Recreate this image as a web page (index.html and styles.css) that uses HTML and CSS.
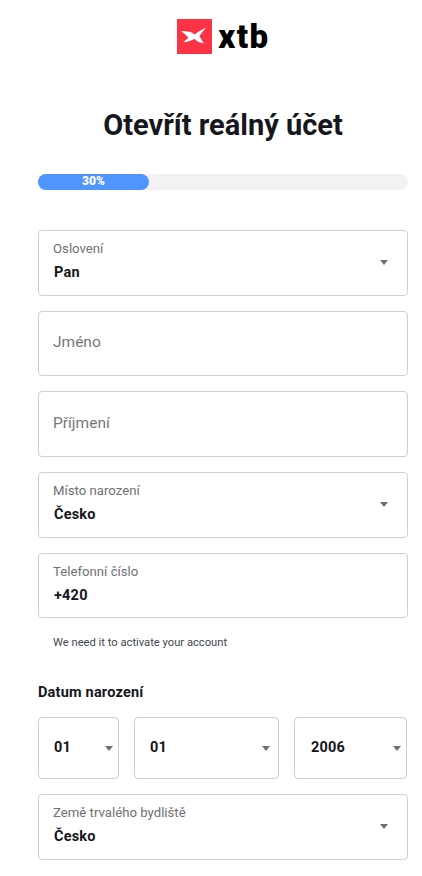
FILE: index.html
```html
<!DOCTYPE html>
<html lang="cs">
<head>
<meta charset="utf-8">
<title>XTB</title>
<link rel="stylesheet" href="styles.css">
</head>
<body>
<main class="page">
  <header class="logo">
    <svg class="logo-mark" viewBox="0 0 35 35" aria-hidden="true">
      <rect width="35" height="35" fill="#fb3345"/>
      <path fill="#fff" d="M4 12 L11 12.500 Q15 13 18 15.500 Q22 11.500 29 9 Q25 13 22.500 17 Q24 20.500 27 24.500 Q21 23.500 17.500 20 Q13 22.500 6 23.500 Q9.500 20.500 11.500 18.500 Q8 15 4 12Z"/>
    </svg>
    <span class="logo-text">xtb</span>
  </header>
  <h1 class="title">Otevřít reálný účet</h1>
  <div class="progress"><div class="progress-bar">30%</div></div>
  <form class="form">
    <div class="field field-select"><span class="label">Oslovení</span><span class="value">Pan</span><i class="caret"></i></div>
    <div class="field field-empty"><span class="placeholder">Jméno</span></div>
    <div class="field field-empty"><span class="placeholder">Příjmení</span></div>
    <div class="field field-select"><span class="label">Místo narození</span><span class="value">Česko</span><i class="caret"></i></div>
    <div class="field"><span class="label">Telefonní číslo</span><span class="value">+420</span></div>
    <p class="hint">We need it to activate your account</p>
    <h2 class="section">Datum narození</h2>
    <div class="date-row">
      <div class="date date-day"><span class="value">01</span><i class="caret"></i></div>
      <div class="date date-month"><span class="value">01</span><i class="caret"></i></div>
      <div class="date date-year"><span class="value">2006</span><i class="caret"></i></div>
    </div>
    <div class="field field-select"><span class="label">Země trvalého bydliště</span><span class="value">Česko</span><i class="caret"></i></div>
  </form>
</main>
</body>
</html>
```
FILE: styles.css
```css
* { box-sizing: border-box; }
html, body { margin: 0; padding: 0; background: #fff; }
body { font-family: Roboto, "Liberation Sans", sans-serif; color: #15171c; height: 876px; overflow: hidden; }
.page { padding: 19px 14px 0 38px; }
.logo { display: flex; justify-content: center; align-items: center; gap: 6px; height: 35px; padding-left: 1px; }
.logo-mark { width: 35px; height: 35px; display: block; }
.logo-text { font-weight: 900; font-size: 33px; line-height: 35px; letter-spacing: 1.5px; color: #000; }
.title { margin: 53px 0 0; text-align: center; font-size: 29px; line-height: 36px; font-weight: 700; }
.progress { margin-top: 31px; height: 16px; border-radius: 8px; background: #f2f2f2; }
.progress-bar { width: 111px; height: 16px; border-radius: 8px; background: #4f94ff; color: #fff; font-size: 12px; line-height: 15px; font-weight: 900; text-align: center; }
.form { margin-top: 40px; display: flex; flex-direction: column; }
.field { position: relative; height: 65.7px; margin-bottom: 15px; padding: 9px 14px 0; border: 1px solid #cfcfcf; border-radius: 4px; display: flex; flex-direction: column; }
.field-empty { justify-content: center; padding: 0 14px 3px; }
.label { font-size: 13.2px; line-height: 18px; color: #6f7175; }
.value { font-size: 14.5px; line-height: 20px; font-weight: 700; margin-top: 5px; padding-left: 1px; color: #15171c; letter-spacing: .2px; }
.placeholder { font-size: 15.5px; line-height: 20px; color: #75777b; }
.caret { position: absolute; width: 0; height: 0; border-left: 4.5px solid transparent; border-right: 4.5px solid transparent; border-top: 5.5px solid #707070; }
.field-select .caret { top: 29px; right: 19px; }
.hint { margin: 1.25px 0 0 15px; font-size: 11.2px; line-height: 15px; color: #3f4650; }
.section { margin: 33px 0 0; font-size: 14.5px; line-height: 20px; font-weight: 700; letter-spacing: .2px; }
.date-row { display: flex; margin-top: 14.5px; margin-bottom: 15px; }
.date { position: relative; height: 62px; border: 1px solid #cfcfcf; border-radius: 4px; display: flex; align-items: center; padding-left: 15px; }
.date .value { margin: 0; padding: 0; }
.date .caret { top: 27.5px; right: 5.5px; }
.date-day { width: 81px; margin-right: 15px; }
.date-month { width: 145px; margin-right: 15px; }
.date-month .caret { right: 8.5px; }
.date-year { width: 113px; padding-left: 16px; }
```
